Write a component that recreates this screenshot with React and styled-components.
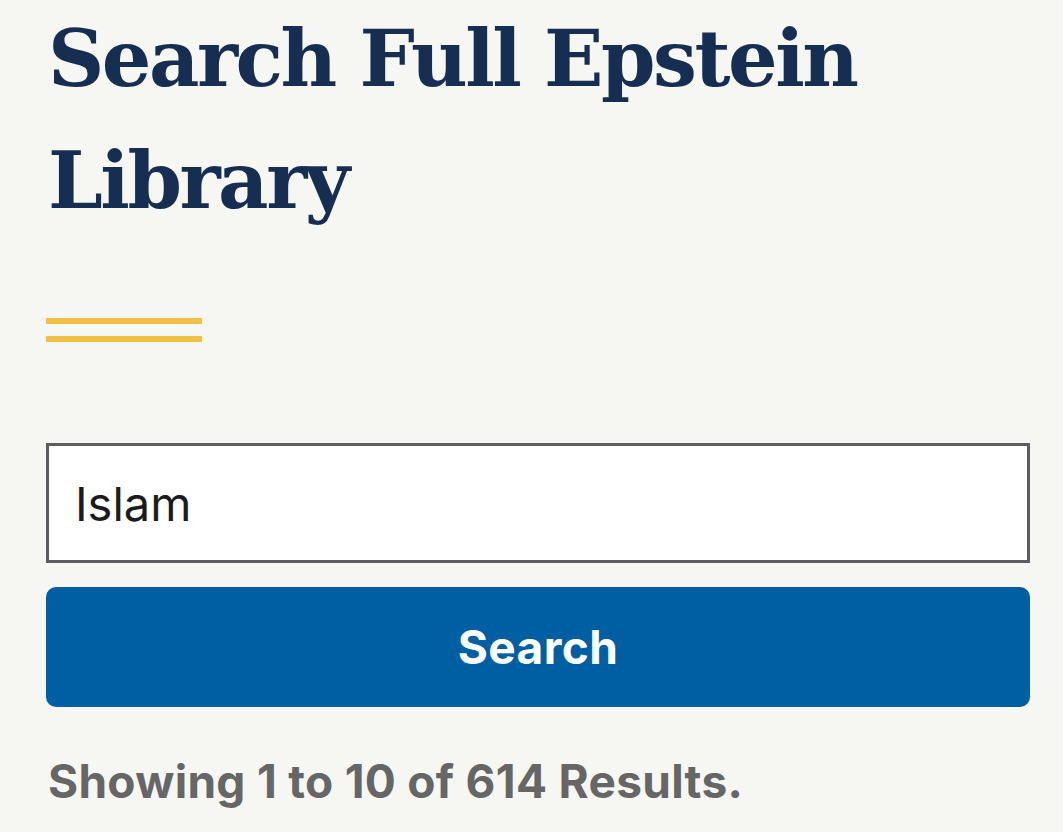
import React from "react";
import styled, { createGlobalStyle } from "styled-components";

const Global = createGlobalStyle`
  html, body { margin: 0; padding: 0; background: #f6f6f2; }
  body { font-family: "Inter", "Noto Sans", sans-serif; }
`;

const Page = styled.main`
  box-sizing: border-box;
  width: 1063px;
  height: 832px;
  overflow: hidden;
  padding: 0 33px 0 46px;
  display: flex;
  flex-direction: column;
`;

const Title = styled.h1`
  margin: -2px 0 0;
  padding: 0 0 0 2px;
  font-family: "DejaVu Serif", "Liberation Serif", serif;
  font-weight: 700;
  font-size: 78px;
  line-height: 122px;
  color: #162e51;
  letter-spacing: -2.5px;
`;

const Rule = styled.div`
  margin-top: 76px;
  width: 156px;
  display: flex;
  flex-direction: column;
  gap: 12px;
`;

const RuleLine = styled.span`
  display: block;
  height: 6px;
  background: #f2c045;
`;

const SearchForm = styled.form`
  margin-top: 101px;
  display: flex;
  flex-direction: column;
  gap: 24px;
`;

const Input = styled.input`
  box-sizing: border-box;
  width: 100%;
  height: 120px;
  border: 3px solid #5c5c63;
  background: #ffffff;
  padding: 0 26px;
  font-family: "Inter", "Noto Sans", sans-serif;
  font-size: 47px;
  color: #1b1b1b;
  outline: none;
`;

const Button = styled.button`
  height: 120px;
  border: none;
  border-radius: 10px;
  background: #005ea2;
  color: #ffffff;
  font-family: "Inter", "Noto Sans", sans-serif;
  font-weight: 700;
  font-size: 46px;
  letter-spacing: 0.4px;
  cursor: pointer;
`;

const Results = styled.p`
  margin: 46px 0 0 2px;
  font-family: "Inter", "Noto Sans", sans-serif;
  font-weight: 700;
  font-size: 46px;
  color: #666666;
  letter-spacing: 0.3px;
`;

export default function App() {
  return (
    <>
      <Global />
      <Page>
        <Title>Search Full Epstein Library</Title>
        <Rule>
          <RuleLine />
          <RuleLine />
        </Rule>
        <SearchForm onSubmit={(e) => e.preventDefault()}>
          <Input defaultValue="Islam" aria-label="Search" />
          <Button type="submit">Search</Button>
        </SearchForm>
        <Results>Showing 1 to 10 of 614 Results.</Results>
      </Page>
    </>
  );
}
